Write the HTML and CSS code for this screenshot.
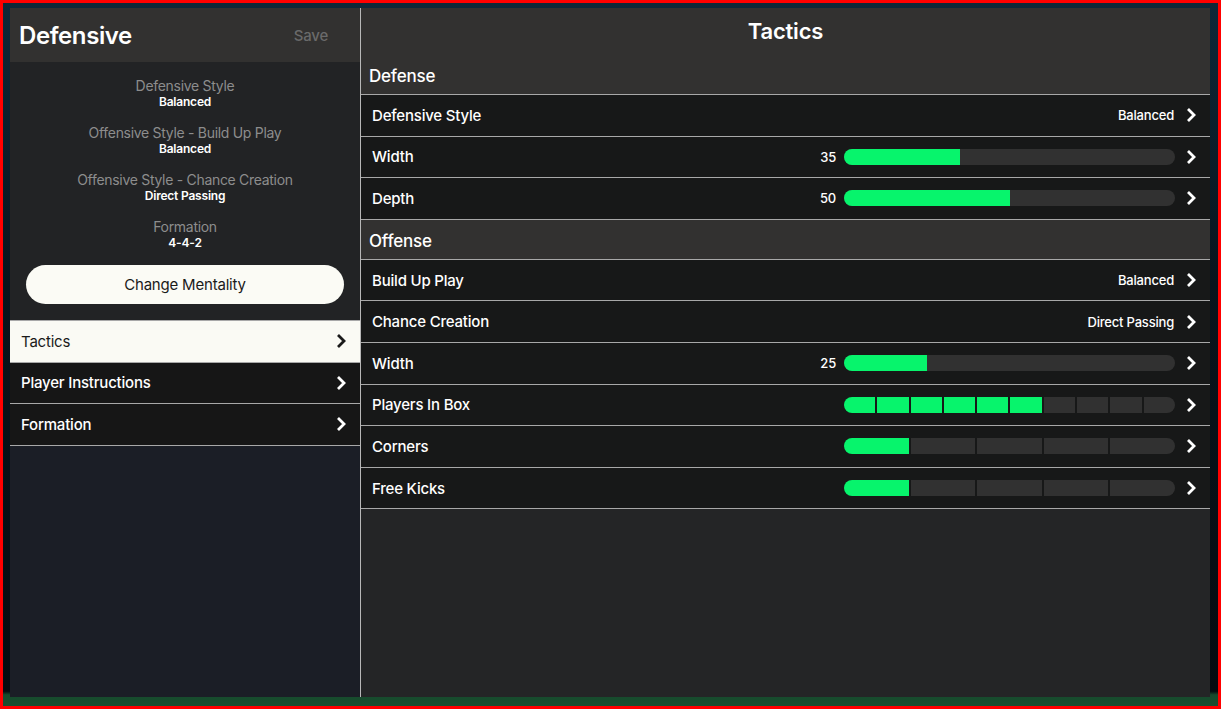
FILE: index.html
```html
<!DOCTYPE html>
<html lang="en">
<head>
  <meta charset="UTF-8" />
  <title>Tactics</title>
  <link rel="stylesheet" href="styles.css">
</head>
<body>
  <div class="app">

    <aside class="side">
      <div class="side-head">
        <h1>Defensive</h1>
        <span class="save">Save</span>
      </div>
      <div class="summary">
        <div class="sum-item"><div class="sum-label">Defensive Style</div><div class="sum-value">Balanced</div></div>
        <div class="sum-item"><div class="sum-label">Offensive Style - Build Up Play</div><div class="sum-value">Balanced</div></div>
        <div class="sum-item"><div class="sum-label">Offensive Style - Chance Creation</div><div class="sum-value">Direct Passing</div></div>
        <div class="sum-item"><div class="sum-label">Formation</div><div class="sum-value">4-4-2</div></div>
        <button class="pill">Change Mentality</button>
      </div>
      <ul class="menu">
        <li class="active">Tactics <svg class="chev" viewBox="0 0 10 16"><polyline points="2,2 8,8 2,14"/></svg></li>
        <li>Player Instructions <svg class="chev" viewBox="0 0 10 16"><polyline points="2,2 8,8 2,14"/></svg></li>
        <li>Formation <svg class="chev" viewBox="0 0 10 16"><polyline points="2,2 8,8 2,14"/></svg></li>
      </ul>
    </aside>

    <main class="main">
      <h2 class="title">Tactics</h2>

      <div class="section">Defense</div>
      <div class="row">
        <span class="label">Defensive Style</span>
        <span class="value">Balanced</span>
        <svg class="chev" viewBox="0 0 10 16"><polyline points="2,2 8,8 2,14"/></svg>
      </div>
      <div class="row">
        <span class="label">Width</span>
        <span class="num">35</span>
        <div class="bar"><div class="fill" style="width:35%"></div></div>
        <svg class="chev" viewBox="0 0 10 16"><polyline points="2,2 8,8 2,14"/></svg>
      </div>
      <div class="row">
        <span class="label">Depth</span>
        <span class="num">50</span>
        <div class="bar"><div class="fill" style="width:50%"></div></div>
        <svg class="chev" viewBox="0 0 10 16"><polyline points="2,2 8,8 2,14"/></svg>
      </div>

      <div class="section">Offense</div>
      <div class="row">
        <span class="label">Build Up Play</span>
        <span class="value">Balanced</span>
        <svg class="chev" viewBox="0 0 10 16"><polyline points="2,2 8,8 2,14"/></svg>
      </div>
      <div class="row">
        <span class="label">Chance Creation</span>
        <span class="value">Direct Passing</span>
        <svg class="chev" viewBox="0 0 10 16"><polyline points="2,2 8,8 2,14"/></svg>
      </div>
      <div class="row">
        <span class="label">Width</span>
        <span class="num">25</span>
        <div class="bar"><div class="fill" style="width:25%"></div></div>
        <svg class="chev" viewBox="0 0 10 16"><polyline points="2,2 8,8 2,14"/></svg>
      </div>
      <div class="row">
        <span class="label">Players In Box</span>
        <div class="bar segs">
          <i class="on"></i><i class="on"></i><i class="on"></i><i class="on"></i><i class="on"></i>
          <i class="on"></i><i></i><i></i><i></i><i></i>
        </div>
        <svg class="chev" viewBox="0 0 10 16"><polyline points="2,2 8,8 2,14"/></svg>
      </div>
      <div class="row">
        <span class="label">Corners</span>
        <div class="bar segs">
          <i class="on"></i><i></i><i></i><i></i><i></i>
        </div>
        <svg class="chev" viewBox="0 0 10 16"><polyline points="2,2 8,8 2,14"/></svg>
      </div>
      <div class="row">
        <span class="label">Free Kicks</span>
        <div class="bar segs">
          <i class="on"></i><i></i><i></i><i></i><i></i>
        </div>
        <svg class="chev" viewBox="0 0 10 16"><polyline points="2,2 8,8 2,14"/></svg>
      </div>
    </main>

  </div>
</body>
</html>
```

FILE: styles.css
```css
* {
  box-sizing: border-box;
}
html, body {
  height: 100%;
}
body {
  margin: 0;
  border: 3px solid #ff0000;
  font-family: Inter, "Noto Sans", sans-serif;
  letter-spacing: -0.2px;
  color: #fff;
  background: linear-gradient(to bottom, #0d2839 0%, #08141d 40%, #050b10 97.5%, #164a2c 98%, #1a4f30 100%);
}
.app {
  display: flex;
  height: 100%;
  padding: 5px 8px 9px 7px;
}

/* left column */
.side {
  width: 351px;
  display: flex;
  flex-direction: column;
  background: #1b1e26;
  border-right: 1px solid #b8b8b8;
}
.side-head {
  height: 54px;
  background: #323130;
  display: flex;
  align-items: center;
  justify-content: space-between;
  padding: 0 32px 0 9px;
}
.side-head h1 {
  margin: 0;
  font-size: 24px;
  font-weight: 600;
  letter-spacing: -0.4px;
}
.save {
  color: #6a6a6a;
  font-size: 15px;
  font-weight: 500;
}
.summary {
  background: #222325;
  padding: 15px 16px 16px;
  display: flex;
  flex-direction: column;
  align-items: center;
}
.sum-item {
  text-align: center;
  margin-bottom: 15px;
}
.sum-label {
  color: #8d8d8d;
  font-size: 14px;
  line-height: 17px;
  letter-spacing: -0.3px;
}
.sum-value {
  font-size: 12px;
  line-height: 15px;
  font-weight: 600;
}
.pill {
  width: 318px;
  height: 39px;
  margin-top: 0;
  border: none;
  border-radius: 20px;
  background: #fbfbf5;
  color: #1a1a1a;
  font-family: inherit;
  font-size: 15px;
  letter-spacing: -0.2px;
}
.menu {
  list-style: none;
  margin: 0;
  padding: 0;
  border-top: 1px solid #a8a8a8;
}
.menu li {
  height: 41.5px;
  display: flex;
  align-items: center;
  justify-content: space-between;
  padding: 0 14px 0 11px;
  background: #161616;
  border-bottom: 1px solid #a8a8a8;
  font-size: 15px;
  font-weight: 500;
}
.menu li.active {
  background: #fafaf4;
  color: #1a1a1a;
  font-weight: 400;
}

.chev {
  width: 10px;
  height: 16px;
  flex: none;
  fill: none;
  stroke: currentColor;
  stroke-width: 2.8;
}

/* right column */
.main {
  flex: 1;
  background: #242526;
}
.title {
  margin: 0;
  height: 47px;
  line-height: 46px;
  background: #323130;
  text-align: center;
  font-size: 22px;
  font-weight: 600;
}
.section {
  height: 40px;
  padding: 11px 0 0 8px;
  background: #323130;
  border-bottom: 1px solid #a8a8a8;
  font-size: 17px;
  font-weight: 500;
}
.row {
  height: 41.6px;
  display: flex;
  align-items: center;
  gap: 8px;
  padding: 0 14px 0 11px;
  background: #171818;
  border-bottom: 1px solid #a8a8a8;
}
.label {
  flex: 1;
  font-size: 15px;
  font-weight: 500;
}
.value {
  font-size: 13px;
  font-weight: 500;
  margin-right: 4px;
}
.num {
  font-size: 13px;
  font-weight: 500;
}
.bar {
  width: 331px;
  height: 16px;
  border-radius: 8px;
  overflow: hidden;
  background: #313131;
  margin-right: 3px;
}
.fill {
  height: 100%;
  background: #07f46c;
}
.segs {
  display: flex;
  gap: 2px;
  background: #171818;
}
.segs i {
  flex: 1;
  background: #313131;
}
.segs i.on {
  background: #07f46c;
}
```
